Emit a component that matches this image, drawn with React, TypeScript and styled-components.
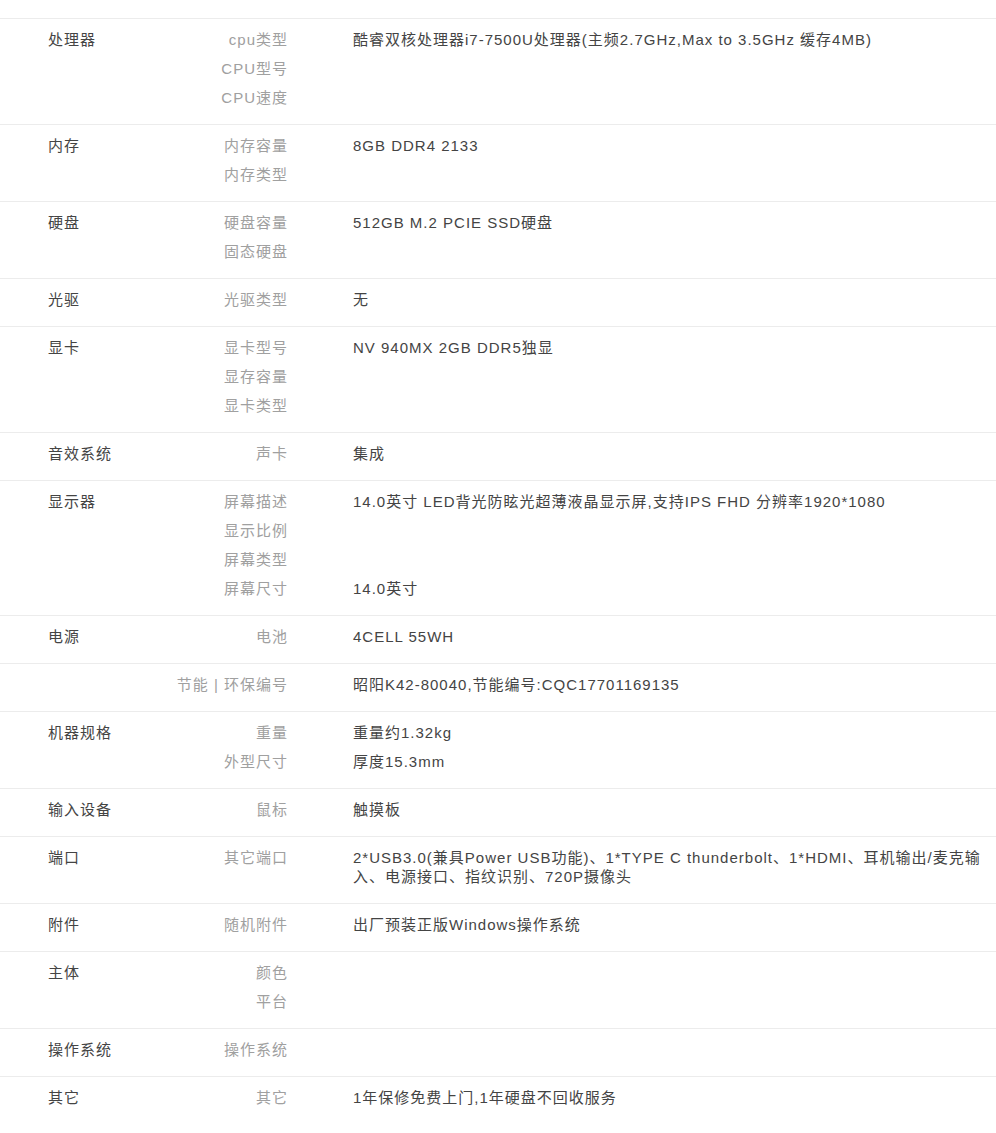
import React from "react";
import styled, { createGlobalStyle } from "styled-components";

const GlobalStyle = createGlobalStyle`
  html, body {
    margin: 0;
    padding: 0;
    background: #ffffff;
  }
  body {
    font-family: "Liberation Sans", Arial, "Noto Sans CJK SC", sans-serif;
    font-size: 15px;
    letter-spacing: 1px;
    color: #444444;
  }
  * { box-sizing: border-box; }
`;

const Page = styled.div`
  padding-top: 18px;
  width: 996px;
`;

const Group = styled.section`
  display: flex;
  border-top: 1px solid #ececec;
  padding: 11px 0 7px;
`;

const GroupTitle = styled.div`
  width: 160px;
  flex: none;
  padding-left: 48px;
  line-height: 19px;
  color: #444444;
`;

const Items = styled.div`
  flex: 1;
  display: flex;
  flex-direction: column;
`;

const Item = styled.div`
  display: grid;
  grid-template-columns: 128px 1fr;
  column-gap: 65px;
  line-height: 19px;
  margin-bottom: 10px;
`;

const Label = styled.div`
  text-align: right;
  color: #a0a0a0;
  white-space: nowrap;
`;

const Value = styled.div`
  color: #444444;
  min-height: 19px;
`;

type Spec = { label: string; value?: string };
type SpecGroup = { title: string; items: Spec[] };

const data: SpecGroup[] = [
  {
    title: "处理器",
    items: [
      { label: "cpu类型", value: "酷睿双核处理器i7-7500U处理器(主频2.7GHz,Max to 3.5GHz 缓存4MB)" },
      { label: "CPU型号" },
      { label: "CPU速度" },
    ],
  },
  {
    title: "内存",
    items: [{ label: "内存容量", value: "8GB DDR4 2133" }, { label: "内存类型" }],
  },
  {
    title: "硬盘",
    items: [{ label: "硬盘容量", value: "512GB M.2 PCIE SSD硬盘" }, { label: "固态硬盘" }],
  },
  { title: "光驱", items: [{ label: "光驱类型", value: "无" }] },
  {
    title: "显卡",
    items: [
      { label: "显卡型号", value: "NV 940MX 2GB DDR5独显" },
      { label: "显存容量" },
      { label: "显卡类型" },
    ],
  },
  { title: "音效系统", items: [{ label: "声卡", value: "集成" }] },
  {
    title: "显示器",
    items: [
      { label: "屏幕描述", value: "14.0英寸 LED背光防眩光超薄液晶显示屏,支持IPS FHD 分辨率1920*1080" },
      { label: "显示比例" },
      { label: "屏幕类型" },
      { label: "屏幕尺寸", value: "14.0英寸" },
    ],
  },
  { title: "电源", items: [{ label: "电池", value: "4CELL 55WH" }] },
  {
    title: "",
    items: [{ label: "节能 | 环保编号", value: "昭阳K42-80040,节能编号:CQC17701169135" }],
  },
  {
    title: "机器规格",
    items: [
      { label: "重量", value: "重量约1.32kg" },
      { label: "外型尺寸", value: "厚度15.3mm" },
    ],
  },
  { title: "输入设备", items: [{ label: "鼠标", value: "触摸板" }] },
  {
    title: "端口",
    items: [
      {
        label: "其它端口",
        value:
          "2*USB3.0(兼具Power USB功能)、1*TYPE C thunderbolt、1*HDMI、耳机输出/麦克输入、电源接口、指纹识别、720P摄像头",
      },
    ],
  },
  { title: "附件", items: [{ label: "随机附件", value: "出厂预装正版Windows操作系统" }] },
  { title: "主体", items: [{ label: "颜色" }, { label: "平台" }] },
  { title: "操作系统", items: [{ label: "操作系统" }] },
  { title: "其它", items: [{ label: "其它", value: "1年保修免费上门,1年硬盘不回收服务" }] },
];

export default function App() {
  return (
    <>
      <GlobalStyle />
      <Page>
        {data.map((g, gi) => (
          <Group key={gi}>
            <GroupTitle>{g.title}</GroupTitle>
            <Items>
              {g.items.map((it, ii) => (
                <Item key={ii}>
                  <Label>{it.label}</Label>
                  <Value>{it.value ?? ""}</Value>
                </Item>
              ))}
            </Items>
          </Group>
        ))}
      </Page>
    </>
  );
}
